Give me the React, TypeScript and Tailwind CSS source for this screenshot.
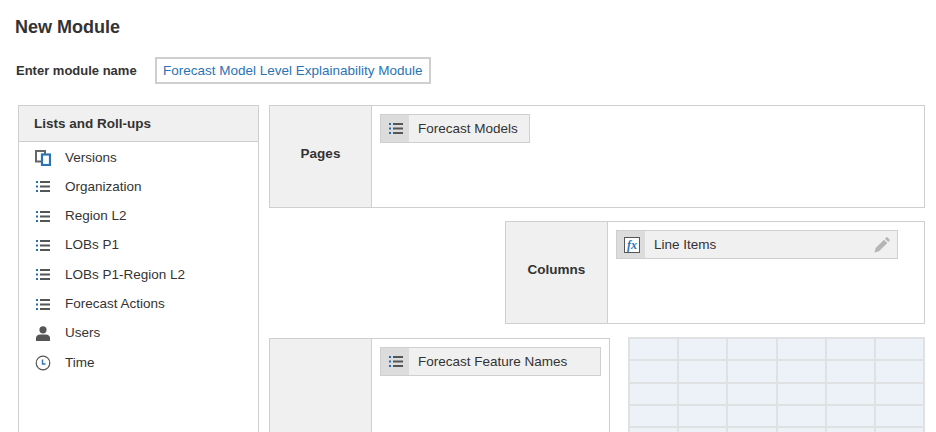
const font = "[font-family:'Liberation_Sans',Arial,sans-serif]";

function ListIcon() {
  return (
    <svg width="14" height="11" viewBox="0 0 14 11" className="shrink-0">
      <rect x="0" y="0" width="2" height="2" fill="#1f6fb5" />
      <rect x="0" y="4.500" width="2" height="2" fill="#1f6fb5" />
      <rect x="0" y="9" width="2" height="2" fill="#1f6fb5" />
      <rect x="4" y="0" width="10" height="2" fill="#555555" />
      <rect x="4" y="4.500" width="10" height="2" fill="#555555" />
      <rect x="4" y="9" width="10" height="2" fill="#555555" />
    </svg>
  );
}

function VersionsIcon() {
  return (
    <svg width="16" height="16" viewBox="0 0 16 16" className="shrink-0">
      <rect x="1" y="1" width="9" height="10.500" fill="#ffffff" stroke="#666666" strokeWidth="2" />
      <rect x="7" y="4.500" width="8" height="10.500" fill="#ffffff" stroke="#2a74b5" strokeWidth="2.200" />
    </svg>
  );
}

function UserIcon() {
  return (
    <svg width="16" height="15" viewBox="-0.500 0 16 15" className="shrink-0">
      <circle cx="7.500" cy="3.800" r="3.600" fill="#555555" />
      <path d="M0.500 15v-3.200c0-2 2-3.300 4-3.300h6c2 0 4 1.300 4 3.300V15z" fill="#555555" />
    </svg>
  );
}

function ClockIcon() {
  return (
    <svg width="16" height="16" viewBox="0 0 16 16" className="shrink-0">
      <circle cx="8" cy="8" r="6.800" fill="none" stroke="#555555" strokeWidth="1.200" />
      <path d="M7.500 4.500V9h3" fill="none" stroke="#2a74b5" strokeWidth="1.400" />
    </svg>
  );
}

function FxIcon() {
  return (
    <span className="-ml-[1px] flex h-[16px] w-[16px] items-center justify-center border border-[#555555] bg-white font-['Liberation_Serif',serif] text-[12px] font-bold italic leading-none text-[#2a74b5]">
      fx
    </span>
  );
}

function PencilIcon() {
  return (
    <svg width="16" height="16" viewBox="0 0 16 16" className="shrink-0">
      <path d="M0.500 15.500l1.200-4.500 8.300-8.300 3.300 3.300-8.300 8.300z" fill="#b5b5b5" />
      <path d="M11 1.700l1.200-1.200c.4-.4 1-.4 1.400 0l1.900 1.900c.4.4.4 1 0 1.400l-1.200 1.200z" fill="#b5b5b5" />
    </svg>
  );
}

function Chip({ label, icon, width, pencil }: { label: string; icon: React.ReactNode; width: string; pencil?: boolean }) {
  return (
    <div className={`flex h-[29px] items-stretch border border-[#cfcfcf] bg-[#f0f0f0] ${width}`}>
      <div className="flex w-[28px] shrink-0 items-center bg-[#dcdcdc] pl-[8px]">{icon}</div>
      <span className="ml-[9px] flex-1 self-center pt-[1px] text-[13.500px] text-[#333333]">{label}</span>
      {pencil && <div className="mr-[7px] flex items-center"><PencilIcon /></div>}
    </div>
  );
}

function Axis({ title, width, height, chip }: { title?: string; width: string; height: string; chip: React.ReactNode }) {
  return (
    <div className={`flex shrink-0 border border-[#cfcfcf] bg-white ${width} ${height}`}>
      <div className="flex w-[102px] shrink-0 items-center justify-center border-r border-[#cfcfcf] bg-[#f0f0f0] pb-[5px] text-[13.500px] font-bold text-[#333333]">
        {title}
      </div>
      <div className="flex-1 pl-[8px] pt-[8px]">{chip}</div>
    </div>
  );
}

const lists: { label: string; icon: React.ReactNode }[] = [
  { label: "Versions", icon: <VersionsIcon /> },
  { label: "Organization", icon: <ListIcon /> },
  { label: "Region L2", icon: <ListIcon /> },
  { label: "LOBs P1", icon: <ListIcon /> },
  { label: "LOBs P1-Region L2", icon: <ListIcon /> },
  { label: "Forecast Actions", icon: <ListIcon /> },
  { label: "Users", icon: <UserIcon /> },
  { label: "Time", icon: <ClockIcon /> },
];

export default function App() {
  return (
    <div className={`h-[432px] w-[936px] overflow-hidden bg-white text-[#333333] ${font}`}>
      <h1 className="pl-[15px] pt-[16px] text-[18px] font-bold leading-[22px]">New Module</h1>

      <div className="mt-[19px] flex items-center pl-[16px]">
        <span className="w-[139px] text-[13px] font-bold">Enter module name</span>
        <div className="flex h-[27px] w-[276px] items-center border-2 border-[#cfcfcf] pl-[6px] pt-[1px] text-[13.500px] text-[#2a74b5]">
          Forecast Model Level Explainability Module
        </div>
      </div>

      <div className="mt-[21px] flex gap-[10px] pl-[18px]">
        <div className="h-[340px] w-[241px] shrink-0 border border-[#cfcfcf]">
          <div className="flex h-[36px] items-center border-b border-[#cfcfcf] bg-[#f0f0f0] pl-[15px] pt-[1px] text-[13.500px] font-bold">
            Lists and Roll-ups
          </div>
          <ul className="pt-[1px]">
            {lists.map((item) => (
              <li key={item.label} className="flex h-[29.300px] items-center text-[13.500px]">
                <span className="flex w-[46px] shrink-0 justify-center pl-[2px]">{item.icon}</span>
                <span>{item.label}</span>
              </li>
            ))}
          </ul>
        </div>

        <div className="flex w-[656px] flex-col">
          <Axis
            title="Pages"
            width="w-[656px]"
            height="h-[103px]"
            chip={<Chip label="Forecast Models" icon={<ListIcon />} width="w-[150px]" />}
          />
          <div className="mt-[13px] flex justify-end">
            <Axis
              title="Columns"
              width="w-[420px]"
              height="h-[103px]"
              chip={<Chip label="Line Items" icon={<FxIcon />} width="w-[282px]" pencil />}
            />
          </div>
          <div className="mt-[14px] flex items-start gap-[18px]">
            <Axis
              width="w-[341px]"
              height="h-[140px]"
              chip={<Chip label="Forecast Feature Names" icon={<ListIcon />} width="w-[221px]" />}
            />
            <div className="-mt-[1px] grid w-[297px] grid-cols-6 border-l-2 border-t-2 border-[#e0e1e3]">
              {Array.from({ length: 30 }).map((_, i) => (
                <div key={i} className="h-[22.300px] border-b-2 border-r-2 border-[#e0e1e3] bg-[#edf1f8]" />
              ))}
            </div>
          </div>
        </div>
      </div>
    </div>
  );
}
